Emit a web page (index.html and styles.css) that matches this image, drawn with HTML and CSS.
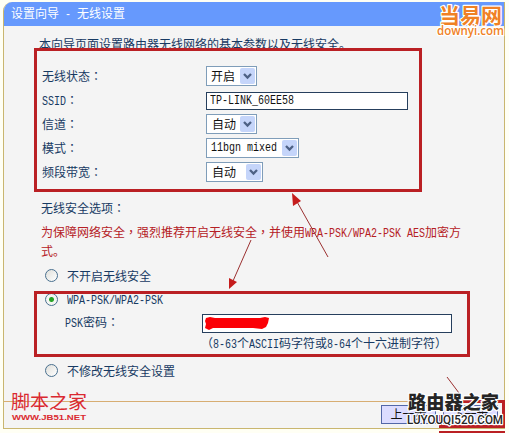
FILE: index.html
```html
<!DOCTYPE html>
<html lang="zh-CN">
<head>
<meta charset="utf-8">
<title>设置向导 - 无线设置</title>
<link rel="stylesheet" href="styles.css">
</head>
<body>
<main class="panel">
  <header class="title">设置向导<span class="en">&nbsp;-&nbsp;</span>无线设置</header>
  <section class="content">
    <p class="intro">本向导页面设置路由器无线网络的基本参数以及无线安全。</p>
    <div class="settings">
      <div class="row"><span class="label">无线状态<i class="mid" lang="zh-TW">：</i></span><span class="select">开启<svg class="drop" viewBox="0 0 15 16"><path d="M4 6l3.5 3.5L11 6"/></svg></span></div>
      <div class="row"><span class="label"><span class="en">SSID</span><i class="mid" lang="zh-TW">：</i></span><span class="input ssid"><span class="en">TP-LINK_60EE58</span></span></div>
      <div class="row"><span class="label">信道<i class="mid" lang="zh-TW">：</i></span><span class="select auto">自动<svg class="drop" viewBox="0 0 15 16"><path d="M4 6l3.5 3.5L11 6"/></svg></span></div>
      <div class="row"><span class="label">模式<i class="mid" lang="zh-TW">：</i></span><span class="select mode"><span class="en">11bgn&nbsp;mixed</span><svg class="drop" viewBox="0 0 15 16"><path d="M4 6l3.5 3.5L11 6"/></svg></span></div>
      <div class="row"><span class="label">频段带宽<i class="mid" lang="zh-TW">：</i></span><span class="select auto band">自动<svg class="drop" viewBox="0 0 15 16"><path d="M4 6l3.5 3.5L11 6"/></svg></span></div>
    </div>
    <p class="subtitle">无线安全选项<i class="mid" lang="zh-TW">：</i></p>
    <p class="warning">为保障网络安全<i class="mid" lang="zh-TW">，</i>强烈推荐开启无线安全<i class="mid" lang="zh-TW">，</i>并使用<span class="en">WPA-PSK/WPA2-PSK&nbsp;AES</span>加密方<br>式。</p>
    <div class="option"><span class="radio"></span>不开启无线安全</div>
    <div class="option"><span class="radio checked"></span><span class="en">WPA-PSK/WPA2-PSK</span></div>
    <div class="password"><span class="pwlabel"><span class="en">PSK</span>密码<i class="mid" lang="zh-TW">：</i></span><span class="input psk"></span></div>
    <p class="hint"><i class="mid" lang="zh-TW">（</i><span class="en">8-63</span>个<span class="en">ASCII</span>码字符或<span class="en">8-64</span>个十六进制字符<i class="mid" lang="zh-TW">）</i></p>
    <div class="option last"><span class="radio"></span>不修改无线安全设置</div>
  </section>
  <footer class="actions"><span class="button">上一步</span><span class="button">下一步</span></footer>
</main>
<svg class="marks" width="509" height="433" viewBox="0 0 509 433">
  <g class="frame">
    <rect x="35.5" y="49.5" width="385" height="141"/>
    <rect x="35.5" y="292.5" width="433" height="63"/>
    <path d="M439 401.5H503.5V426.5H439M439 432.5H505"/>
    <path d="M440.5 415V427"/>
  </g>
  <g class="arrow">
    <path d="M328 257L296 200M251 240L233 281M447 377L459 393"/>
    <path class="head" d="M292 193L301 201L293 206ZM229 289L229 278L237 282Z"/>
  </g>
  <path class="scribble" d="M206 318L210 317L215 318H260L265 317L269 318L268 323L266 327L262 329L253 328H213L209 330L205 328L206 324L205 321Z"/>
  <g class="halo orange">
    <text class="cjk" x="439" y="23" font-size="21" textLength="63" lengthAdjust="spacingAndGlyphs">当易网</text>
    <text class="latin" x="437" y="35" font-size="12.5" textLength="67" lengthAdjust="spacingAndGlyphs">downyi.com</text>
  </g>
  <g class="redmark">
    <text class="cjk" x="11" y="409" font-size="19" textLength="76" lengthAdjust="spacingAndGlyphs">脚本之家</text>
    <text class="latin" x="12" y="420" font-size="7.5" textLength="74" lengthAdjust="spacingAndGlyphs">WWW.JB51.NET</text>
  </g>
  <g class="halo dark">
    <text class="cjk" x="408" y="409" font-size="18.5" textLength="91" lengthAdjust="spacingAndGlyphs">路由器之家</text>
    <text class="latin" x="407" y="424" font-size="13" textLength="96" lengthAdjust="spacingAndGlyphs">LUYOUQI520.COM</text>
  </g>
</svg>
</body>
</html>
```
FILE: styles.css
```css
* { box-sizing: border-box; }
body {
  margin: 0;
  padding: 2px 4px 4px 3px;
  width: 509px;
  height: 433px;
  overflow: hidden;
  background: #fffff4;
  color: #173a63;
  font: 12px/18px "Noto Sans CJK SC", sans-serif;
}
p { margin: 0; }
.mid { font-family: "Noto Sans CJK TC", sans-serif; font-style: normal; }
.en {
  display: inline-block;
  font: 10px/14px "Liberation Mono", monospace;
  transform: scaleY(1.22);
}
.panel {
  width: 502px;
  height: 427px;
  display: flex;
  flex-direction: column;
  background: #f4f4f4;
  border: 1px solid #c9b66f;
  border-top: 0;
  border-radius: 9px 0 0 0;
  overflow: hidden;
}
.title {
  height: 24px;
  flex: none;
  margin-left: -1px;
  padding: 2px 0 0 8px;
  background: #6699fd;
  color: #fff;
}
.content { flex: 1; padding: 9px 0 0 37px; white-space: nowrap; }
.intro { height: 29px; margin-left: -2px; }
.settings { height: 135px; padding-left: 1px; }
.row { height: 24px; display: flex; align-items: center; }
.label { width: 164px; }
.select, .input { background: #fff; color: #111; display: flex; align-items: center; }
.select {
  width: 51px;
  height: 20px;
  padding: 0 1px 1px 4px;
  border: 1px solid #7f9db9;
  justify-content: space-between;
}
.auto { padding-left: 5px; }
.mode { width: 93px; }
.mode .en { padding-top: 1px; }
.band { width: 57px; }
.drop { width: 15px; height: 16px; flex: none; background: #c5d5fa; border-radius: 2px; margin-top: 1px; }
.drop path { fill: none; stroke: #4d6185; stroke-width: 2.3; }
.input { height: 18px; border: 1px solid #263f5d; padding-left: 3px; }
.ssid { width: 202px; margin-top: 1px; }
.ssid .en { padding-top: 1px; }
.subtitle { height: 24px; }
.warning { color: #b52025; height: 41px; }
.option { height: 24px; display: flex; align-items: center; gap: 9px; padding-left: 4px; }
.radio {
  width: 13px;
  height: 13px;
  margin-top: -2px;
  border: 1.5px solid #49708f;
  border-radius: 50%;
  background: linear-gradient(135deg, #dfdfda, #fff);
}
.checked { background: radial-gradient(circle, #27a327 0 2px, #f4f6f2 3px); }
.option .en { padding-top: 1px; }
.password { height: 22px; display: flex; align-items: center; padding: 0 0 2px 24px; }
.pwlabel { width: 137px; }
.psk { width: 250px; height: 19px; margin-top: 2px; }
.hint { height: 24px; padding-left: 160px; }
.last { margin-top: 1px; }
.actions {
  height: 27px;
  flex: none;
  display: flex;
  justify-content: flex-end;
  align-items: center;
  gap: 7px;
  padding: 0 6px 1px 0;
  border-top: 1px solid #d7ad72;
}
.button {
  width: 55px;
  height: 19px;
  border: 1px solid #5367a8;
  background: #dcdcff;
  color: #111;
  text-align: center;
  line-height: 16px;
}
.marks { position: absolute; left: 0; top: 0; pointer-events: none; }
.frame { fill: none; stroke: #ba2024; stroke-width: 3; }
.arrow { fill: none; stroke: #9b3030; stroke-width: 1; }
.head { fill: #c51c1c; stroke: none; }
.scribble { fill: #fb0006; }
.cjk { font-family: "Noto Sans CJK SC", sans-serif; font-weight: 700; }
.latin { font-family: "Liberation Sans", sans-serif; }
.halo { paint-order: stroke; stroke: #fff; stroke-width: 2.5; stroke-linejoin: round; }
.orange { fill: #f08125; }
.orange .latin { font-family: "Open Sans", sans-serif; font-weight: 600; }
.redmark { fill: #da2930; }
.redmark .cjk { font-weight: 400; }
.redmark .latin { font-weight: 700; }
.dark { fill: #252525; }
.dark .cjk { font-weight: 900; }
.dark .latin { font-family: Roboto, sans-serif; font-weight: 500; }
```
